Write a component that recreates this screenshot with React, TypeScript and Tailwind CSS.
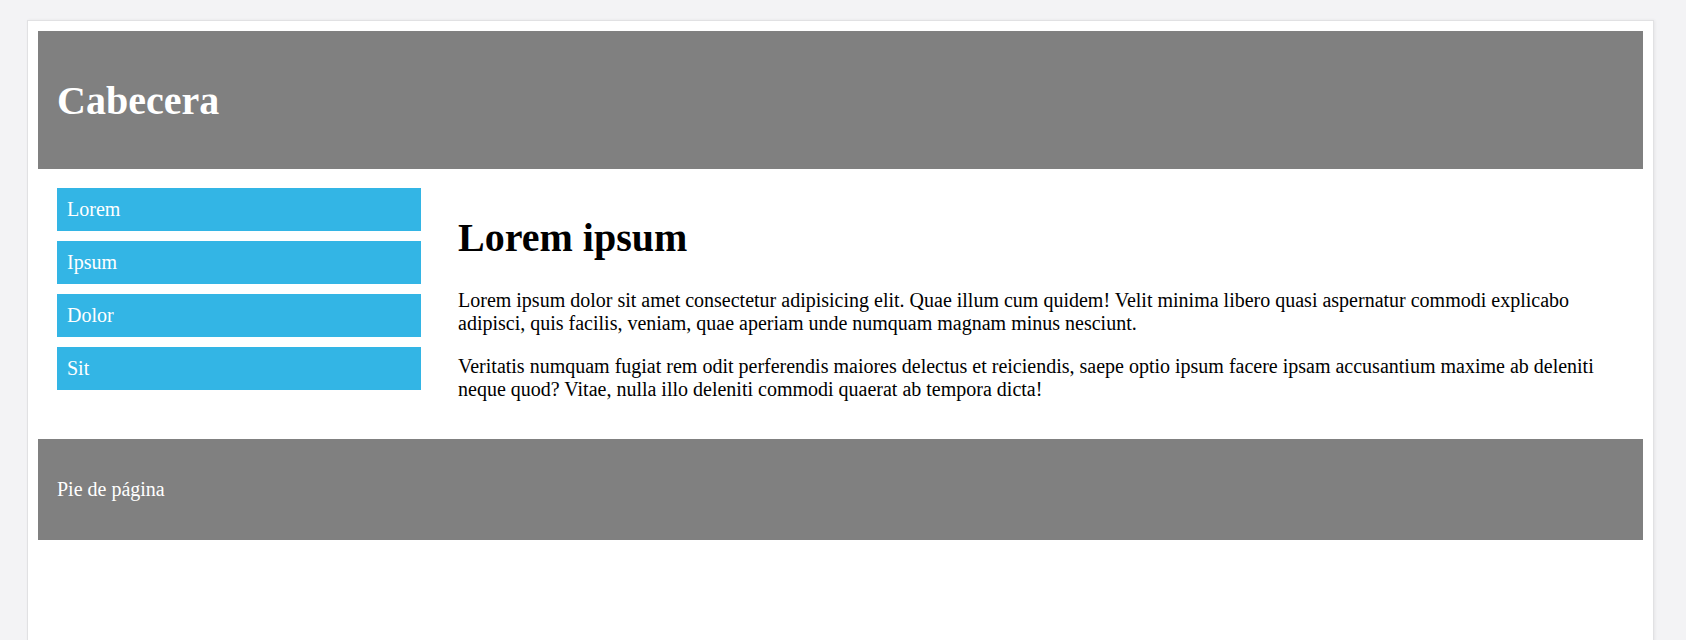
import React from 'react';

const menu = ['Lorem', 'Ipsum', 'Dolor', 'Sit'];

const App: React.FC = () => {
  return (
    <div className="h-screen overflow-hidden bg-[#f3f3f5] pl-[27px] pt-[20px] font-['Liberation_Serif','Times_New_Roman',serif] text-[20px] leading-[23px]">
      <div className="w-[1627px] h-[700px] bg-white border border-[#e1e1e3] shadow-[1px_0_3px_rgba(0,0,0,0.06)] p-[10px]">
        <header className="bg-[#808080] px-[19px] py-[19px]">
          <h1 className="mt-[28px] mb-[26px] text-[40px] leading-[46px] font-bold text-white">Cabecera</h1>
        </header>

        <section className="flex gap-[37px] p-[19px]">
          <nav className="w-[364px] shrink-0 flex flex-col gap-[10px]">
            {menu.map((item) => (
              <a key={item} className="block bg-[#33b5e5] text-white p-[10px]">
                {item}
              </a>
            ))}
          </nav>

          <main className="flex-1 text-black">
            <h1 className="mt-[27px] mb-[28px] text-[40px] leading-[46px] font-bold">Lorem ipsum</h1>
            <p className="mb-[20px]">
              Lorem ipsum dolor sit amet consectetur adipisicing elit. Quae illum cum quidem! Velit minima libero quasi aspernatur commodi explicabo adipisci, quis facilis, veniam, quae aperiam unde numquam magnam minus nesciunt.
            </p>
            <p className="mb-[19px]">
              Veritatis numquam fugiat rem odit perferendis maiores delectus et reiciendis, saepe optio ipsum facere ipsam accusantium maxime ab deleniti neque quod? Vitae, nulla illo deleniti commodi quaerat ab tempora dicta!
            </p>
          </main>
        </section>

        <footer className="bg-[#808080] p-[19px] text-white">
          <p className="my-[20px]">Pie de página</p>
        </footer>
      </div>
    </div>
  );
};

export default App;
